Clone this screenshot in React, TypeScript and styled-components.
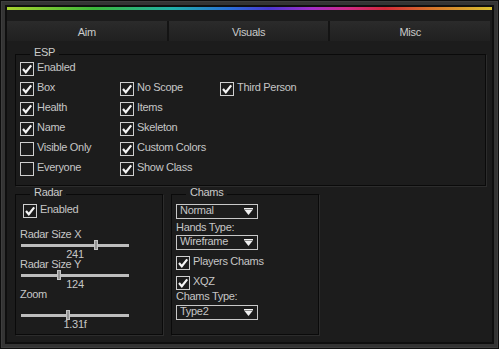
import * as React from "react";
import styled, { createGlobalStyle } from "styled-components";

const GlobalStyle = createGlobalStyle`
  html, body {
    margin: 0;
    padding: 0;
    background: #1c1c1c;
  }
  body {
    font-family: "Liberation Sans", Arial, sans-serif;
    font-size: 11px;
    letter-spacing: -0.3px;
    color: #c6c6c6;
  }
`;

const Frame = styled.div`
  width: 499px;
  height: 349px;
  box-sizing: border-box;
  border: 1px solid #0e0e0e;
  padding: 4px;
  background: #343434;
  box-shadow: inset 0 0 0 1px #3e3e3e;
`;

const Inner = styled.div`
  height: 100%;
  box-sizing: border-box;
  border: 2px solid #0f0f0f;
  background: #1c1c1c;
  display: flex;
  flex-direction: column;
`;

const Rainbow = styled.div`
  height: 3px;
  flex-shrink: 0;
  background: linear-gradient(
    90deg,
    #a8d22e 0%,
    #3cb83a 18%,
    #20b0a8 34%,
    #2a6ed8 46%,
    #4a38d0 54%,
    #a52ec8 63%,
    #cf2a8a 70%,
    #d42a3a 78%,
    #d6702a 87%,
    #d8c030 100%
  );
`;

const Tabs = styled.div`
  display: flex;
  gap: 2px;
  height: 20px;
  margin: 11px 2px 0 0;
  background: #141414;
`;

const Tab = styled.div`
  flex: 1;
  display: flex;
  align-items: center;
  justify-content: center;
  padding-top: 2px;
  box-sizing: border-box;
  background: linear-gradient(#2b2b2b, #202020);
  color: #cacaca;
`;

const Body = styled.div`
  padding: 13px 6px 0 8px;
  display: flex;
  flex-direction: column;
`;

const GroupBox = styled.div<{ $w: number; $h: number; $pl: number }>`
  position: relative;
  width: ${(p) => p.$w}px;
  height: ${(p) => p.$h}px;
  box-sizing: border-box;
  border: 1px solid #0a0a0a;
  box-shadow: 1px 1px 0 #2c2c2c;
  padding: 9px 0 0 ${(p) => p.$pl}px;
  display: flex;
  flex-direction: column;
`;

const Legend = styled.div`
  position: absolute;
  top: -8px;
  left: 14px;
  padding: 0 4px;
  line-height: 10px;
  background: #1c1c1c;
  color: #cacaca;
`;

const EspColumns = styled.div`
  display: flex;
  margin-top: -2px;
`;

const Column = styled.div<{ $offset?: boolean }>`
  width: 100px;
  display: flex;
  flex-direction: column;
  gap: 6px;
  padding-top: ${(p) => (p.$offset ? 20 : 0)}px;
`;

const Row = styled.div`
  display: flex;
  gap: 8px;
  margin-top: 8px;
`;

const CheckRow = styled.div<{ $mt?: number; $ml?: number }>`
  display: flex;
  align-items: flex-start;
  gap: 3px;
  height: 14px;
  margin-top: ${(p) => p.$mt ?? 0}px;
  margin-left: ${(p) => p.$ml ?? 0}px;
`;

const Box = styled.div`
  width: 14px;
  height: 14px;
  box-sizing: border-box;
  border: 1px solid #cfcfcf;
  background: #1c1c1c;
  display: flex;
  align-items: center;
  justify-content: center;
`;

const Text = styled.div<{ $mt?: number }>`
  line-height: 10px;
  white-space: nowrap;
  margin-top: ${(p) => p.$mt ?? 0}px;
`;

const SliderTrack = styled.div<{ $mt: number }>`
  position: relative;
  width: 108px;
  height: 10px;
  margin: ${(p) => p.$mt}px 0 0 1px;
  display: flex;
  align-items: center;
`;

const TrackLine = styled.div`
  width: 100%;
  height: 3px;
  background: #bdbdbd;
`;

const Thumb = styled.div`
  position: absolute;
  top: 0;
  width: 4px;
  height: 10px;
  box-sizing: border-box;
  border: 1px solid #c4c4c4;
  background: #969696;
`;

const Value = styled.div`
  width: 108px;
  margin-left: 1px;
  height: 9px;
  line-height: 9px;
  text-align: center;
`;

const Select = styled.div<{ $mt?: number }>`
  width: 82px;
  height: 15px;
  box-sizing: border-box;
  border: 1px solid #c8c8c8;
  display: flex;
  justify-content: space-between;
  align-items: flex-start;
  padding: 0 4px 0 3px;
  margin-top: ${(p) => p.$mt ?? 0}px;
  line-height: 10px;
`;

const Arrow = styled.svg`
  margin-top: 3px;
`;

function Check({ label, checked, mt, ml }: { label: string; checked: boolean; mt?: number; ml?: number }) {
  return (
    <CheckRow $mt={mt} $ml={ml}>
      <Box>
        {checked && (
          <svg width="12" height="12" viewBox="0 0 12 12">
            <polyline points="2,6 4.8,9.2 10.2,2.4" fill="none" stroke="#f4f4f4" strokeWidth="2.2" />
          </svg>
        )}
      </Box>
      <Text>{label}</Text>
    </CheckRow>
  );
}

function Slider({ label, value, pos, mt, trackMt }: { label: string; value: string; pos: number; mt: number; trackMt: number }) {
  return (
    <>
      <Text $mt={mt}>{label}</Text>
      <SliderTrack $mt={trackMt}>
        <TrackLine />
        <Thumb style={{ left: `${pos * 108 - 2}px` }} />
      </SliderTrack>
      <Value>{value}</Value>
    </>
  );
}

function Dropdown({ value, mt }: { value: string; mt?: number }) {
  return (
    <Select $mt={mt}>
      <span>{value}</span>
      <Arrow width="9" height="7" viewBox="0 0 9 7">
        <rect x="0" y="0" width="9" height="1.5" fill="#f0f0f0" />
        <polygon points="0.5,2 8.5,2 4.5,7" fill="#f0f0f0" />
      </Arrow>
    </Select>
  );
}

export default function App() {
  return (
    <>
      <GlobalStyle />
      <Frame>
        <Inner>
          <Rainbow />
          <Tabs>
            <Tab>Aim</Tab>
            <Tab>Visuals</Tab>
            <Tab>Misc</Tab>
          </Tabs>
          <Body>
            <GroupBox $w={471} $h={132} $pl={4}>
              <Legend>ESP</Legend>
              <EspColumns>
                <Column>
                  <Check label="Enabled" checked />
                  <Check label="Box" checked />
                  <Check label="Health" checked />
                  <Check label="Name" checked />
                  <Check label="Visible Only" checked={false} />
                  <Check label="Everyone" checked={false} />
                </Column>
                <Column $offset>
                  <Check label="No Scope" checked />
                  <Check label="Items" checked />
                  <Check label="Skeleton" checked />
                  <Check label="Custom Colors" checked />
                  <Check label="Show Class" checked />
                </Column>
                <Column $offset>
                  <Check label="Third Person" checked />
                </Column>
              </EspColumns>
            </GroupBox>
            <Row>
              <GroupBox $w={148} $h={141} $pl={4}>
                <Legend>Radar</Legend>
                <Check label="Enabled" checked ml={3} />
                <Slider label="Radar Size X" value="241" pos={0.69} mt={11} trackMt={1} />
                <Slider label="Radar Size Y" value="124" pos={0.35} mt={0} trackMt={1} />
                <Slider label="Zoom" value="1.31f" pos={0.435} mt={0} trackMt={11} />
              </GroupBox>
              <GroupBox $w={148} $h={141} $pl={4}>
                <Legend>Chams</Legend>
                <Dropdown value="Normal" />
                <Text $mt={3}>Hands Type:</Text>
                <Dropdown value="Wireframe" mt={3} />
                <Check label="Players Chams" checked mt={6} />
                <Check label="XQZ" checked mt={6} />
                <Text $mt={1}>Chams Type:</Text>
                <Dropdown value="Type2" mt={4} />
              </GroupBox>
            </Row>
          </Body>
        </Inner>
      </Frame>
    </>
  );
}
